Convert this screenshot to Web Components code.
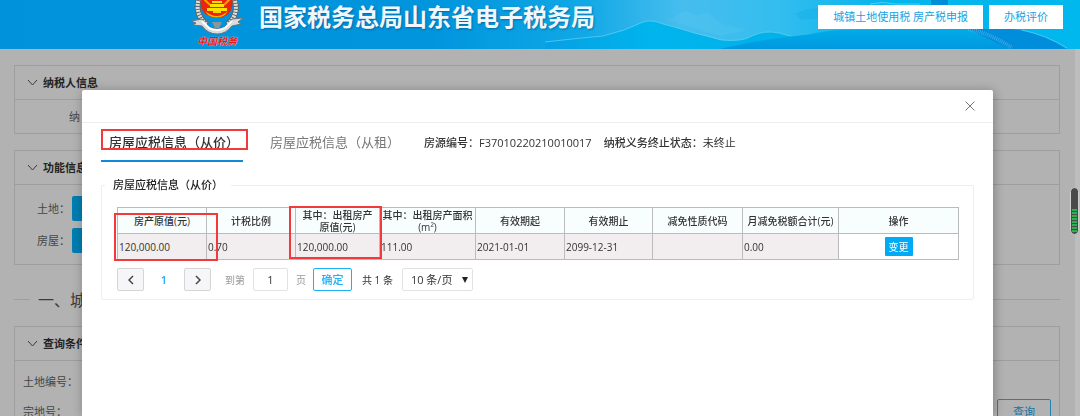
<!DOCTYPE html>
<html lang="zh-CN">
<head>
<meta charset="utf-8">
<title>电子税务局</title>
<style>
    html, body {
        height: 100%;
    }

    body {
        margin: 0;
        overflow: hidden;
        background: #fff;
        color: #444;
        font: 11px/16px 'Open Sans', 'Noto Sans CJK SC', sans-serif;
    }
</style>
</head>
<body>
<tax-page>
    <tax-header slot="header"></tax-header>
    <fold-panel name="纳税人信息">
        <form-line class="indent">纳</form-line>
    </fold-panel>
    <fold-panel name="功能信息">
        <action-line name="土地："></action-line>
        <action-line name="房屋："></action-line>
    </fold-panel>
    <section-title>一、城</section-title>
    <fold-panel name="查询条件">
        <query-form></query-form>
    </fold-panel>
    <tax-dialog slot="dialog">
        <house-tabs></house-tabs>
        <house-group name="房屋应税信息（从价）">
            <house-table></house-table>
            <page-bar></page-bar>
        </house-group>
    </tax-dialog>
    <battery-badge slot="dialog"></battery-badge>
</tax-page>

<script>
function define(name, html, setup) {
    const template = document.createElement('template');
    template.innerHTML = html;

    window.customElements.define(name, class extends HTMLElement {
        constructor() {
            super();
            this.attachShadow({ mode: 'open' });
            this.shadowRoot.appendChild(template.content.cloneNode(true));
            if (setup) setup(this, this.shadowRoot);
        }
    });
}

// copies the name attribute into the .name node
function setName(el, root) {
    root.querySelector('.name').textContent = el.getAttribute('name');
}

define('tax-page', `
<style>
    :host {
        display: block;
        min-height: 100%;
    }

    main {
        display: flex;
        flex-direction: column;
        gap: 16px;
        padding: 16px 20px 0 14px;
    }

    .mask {
        position: fixed;
        inset: 0;
        background: rgba(0, 0, 0, .3);
    }

    .track {
        position: fixed;
        top: 49px;
        right: 0;
        bottom: 0;
        width: 5px;
        background: #bdbdbd;
    }
</style>
<slot name="header"></slot>
<main><slot></slot></main>
<div class="mask"></div>
<div class="track"></div>
<slot name="dialog"></slot>
`);

define('tax-logo', `
<style>
    :host {
        display: flex;
        flex-direction: column;
        align-items: center;
        width: 54px;
    }

    svg {
        display: block;
    }

    span {
        color: #e8141c;
        font: italic bold 10px/14px 'Liberation Serif', 'Noto Sans CJK SC', serif;
        text-shadow: 0 0 1px #fff;
    }
</style>
<svg width="54" height="35" viewBox="0 0 54 35" aria-hidden="true">
    <g fill="none" stroke="#5d6669" stroke-width="6">
        <path d="M9 -2Q4 14 17 25"/>
        <path d="M44 -2Q50 14 37 25"/>
    </g>
    <g fill="none" stroke="#dcdedb" stroke-width="4" stroke-dasharray="2 1">
        <path d="M9 -2Q4 14 17 25"/>
        <path d="M44 -2Q50 14 37 25"/>
    </g>
    <path d="M11 -2H42Q44 10 37 15Q27 21 17 15Q9 10 11 -2Z" fill="#e9260d"/>
    <path d="M15 11Q27 21 38 11L35 15Q27 20 18 15Z" fill="#ffb000"/>
    <path d="M14 -1L20 5M40 -1L34 5" stroke="#ff9c00" stroke-width="2"/>
    <path d="M20 4H34V7H20ZM22 1H32V3H22ZM17 8H37V11H17Z" fill="#ffe000"/>
    <path d="M23 11H31V13H23Z" fill="#ffd000"/>
    <path d="M1 21L12 19L17 26Q27 32 37 26L42 19L53 18L48 22L51 24L42 26Q36 34 27 34Q18 34 12 26L3 25L6 23Z" fill="#d9dcda" stroke="#68757b" stroke-width="1"/>
    <path d="M12 21L19 28Q27 32 35 28L42 21" fill="none" stroke="#fff" stroke-width="2"/>
    <path d="M22 22H32L29 28H25Z" fill="#8c969a"/>
</svg>
<span>中国税务</span>
`);

define('tax-header', `
<style>
    :host {
        position: relative;
        z-index: 2;
        display: flex;
        align-items: flex-start;
        height: 49px;
        padding: 0 17px 0 190px;
        box-sizing: border-box;
        overflow: hidden;
        background: #0093dc;
    }

    .scene {
        position: absolute;
        top: 0;
        left: 0;
        width: 100%;
        height: 100%;
    }

    tax-logo, h1, nav {
        position: relative;
    }

    h1 {
        margin: 0 auto 0 15px;
        color: #f1f8fd;
        font-size: 24px;
        line-height: 34px;
        text-shadow: 1px 1px 2px rgba(0, 60, 110, .5);
        white-space: nowrap;
    }

    nav {
        display: flex;
        gap: 6px;
        padding-top: 5px;
    }

    button {
        height: 24px;
        padding: 0 15px;
        border: 0;
        background: #fff;
        color: #1b9fe3;
        font: inherit;
        white-space: nowrap;
    }
</style>
<svg class="scene" viewBox="0 0 1080 49" preserveAspectRatio="none" aria-hidden="true">
    <defs>
        <linearGradient id="sky">
            <stop offset="0" stop-color="#0093dc"/>
            <stop offset=".4" stop-color="#0095dd"/>
            <stop offset=".54" stop-color="#10a8e6"/>
            <stop offset=".63" stop-color="#46bdee"/>
            <stop offset=".72" stop-color="#34bdef"/>
            <stop offset=".82" stop-color="#05b5ec"/>
            <stop offset="1" stop-color="#00b8ee"/>
        </linearGradient>
        <linearGradient id="hill">
            <stop offset="0" stop-color="#06a0e4"/>
            <stop offset=".2" stop-color="#00b4ec"/>
            <stop offset=".5" stop-color="#00b1ea"/>
            <stop offset="1" stop-color="#02a4e4"/>
        </linearGradient>
        <linearGradient id="base" x2="0" y2="1">
            <stop offset="0" stop-color="#00adea"/>
            <stop offset="1" stop-color="#0098df"/>
        </linearGradient>
    </defs>
    <path d="M0 0H1080V49H0Z" fill="url(#sky)"/>
    <path d="M668 20L685 11L697 15L707 12L722 24L748 30L720 36Z" fill="#6accf2" opacity=".2"/>
    <path d="M545 42Q580 38 603 36Q625 31 643 22Q652 19 663 24Q682 29 694 33L720 40Q742 42 752 36Q764 30 779 33L798 38Q815 31 840 30L970 28L1012 30Q1045 36 1068 49H545Z" fill="url(#hill)"/>
    <path d="M545 42Q580 38 603 36Q625 31 643 22Q652 19 663 24Q682 29 694 33Q708 36 722 40Q742 42 752 36Q764 30 779 33L794 37" fill="none" stroke="#67d0f2" stroke-width="1" opacity=".7"/>
    <path d="M720 49Q760 39 815 34Q840 28 870 31L970 28Q988 33 1012 49Z" fill="url(#base)"/>
    <path d="M968 29Q985 37 1009 49H1066Q1045 33 1012 29Z" fill="#008ddb"/>
    <path d="M968 29Q990 33 1012 48" fill="none" stroke="#6fc6ef" stroke-width="4" stroke-dasharray="1 1" opacity=".5"/>
    <path d="M1022 30Q1046 35 1067 48" fill="none" stroke="#4dc4f1"/>
    <path d="M795 14Q808 7 822 8V18L801 20Z" fill="#009fe2" opacity=".2"/>
    <path d="M931 0H948V5H931Z" fill="#008dd7"/>
    <path d="M870 4Q882 1 895 4H920" fill="none" stroke="#78d4f5" opacity=".7"/>
</svg>
<tax-logo></tax-logo>
<h1>国家税务总局山东省电子税务局</h1>
<nav>
    <button type="button">城镇土地使用税 房产税申报</button>
    <button type="button">办税评价</button>
</nav>
`);

define('fold-panel', `
<style>
    :host {
        display: block;
        border: 1px solid #e2e2e2;
    }

    h2 {
        display: flex;
        align-items: center;
        gap: 5px;
        height: 33px;
        margin: 0;
        padding-left: 12px;
        border-bottom: 1px solid #e2e2e2;
        color: #333;
        font-size: 11px;
    }
</style>
<h2>
    <svg width="11" height="8" viewBox="0 0 11 8" aria-hidden="true"><path d="M1 1L5.500 6L10 1" fill="none" stroke="#555"/></svg>
    <span class="name"></span>
</h2>
<slot></slot>
`, setName);

define('form-line', `
<style>
    :host {
        display: flex;
        align-items: center;
        height: 33px;
        padding-left: 54px;
        color: #666;
    }
</style>
<slot></slot>
`);

define('action-line', `
<style>
    :host {
        display: flex;
        align-items: center;
        height: 25px;
        padding: 11px 0 0 22px;
        color: #666;
    }

    :host(:last-child) {
        padding: 7px 0 11px 22px;
    }

    label {
        width: 35px;
    }

    button {
        width: 64px;
        height: 25px;
        border: 0;
        border-radius: 2px;
        background: #00b4ff;
    }
</style>
<label class="name" for="go"></label>
<button type="button" id="go"></button>
`, setName);

define('section-title', `
<style>
    :host {
        display: flex;
        align-items: center;
        gap: 8px;
        height: 29px;
        margin: 4px 0 -4px;
        color: #555;
        font-size: 16px;
    }

    :host::before, :host::after {
        content: '';
        width: 16px;
        border-top: 1px solid #e2e2e2;
    }

    :host::after {
        flex: 1;
    }
</style>
<slot></slot>
`);

define('query-form', `
<style>
    :host {
        display: flex;
        justify-content: space-between;
        align-items: flex-end;
        padding: 6px 8px 0;
        color: #666;
    }

    .line {
        display: flex;
        align-items: center;
        height: 30px;
    }

    label {
        width: 70px;
    }

    input {
        width: 120px;
        height: 24px;
        box-sizing: border-box;
        border: 1px solid #ddd;
    }

    button {
        width: 54px;
        height: 26px;
        margin-bottom: 2px;
        border: 1px solid #2dbdff;
        border-radius: 2px;
        background: none;
        color: #1fa8ee;
        font: inherit;
    }
</style>
<div>
    <div class="line"><label for="land">土地编号：</label><input id="land"></div>
    <div class="line"><label for="parcel">宗地号：</label><input id="parcel"></div>
</div>
<button type="button">查询</button>
`);

define('tax-dialog', `
<style>
    :host {
        position: fixed;
        top: 90px;
        right: 87px;
        bottom: 0;
        left: 82px;
        background: #fff;
        border-radius: 2px 2px 0 0;
        box-shadow: 1px 1px 12px rgba(0, 0, 0, .3);
    }

    header {
        display: flex;
        justify-content: flex-end;
        align-items: center;
        height: 32px;
        padding-right: 15px;
        border-bottom: 1px solid #eee;
    }

    button {
        display: flex;
        padding: 3px;
        border: 0;
        background: none;
    }

    section {
        padding: 0 19px;
    }
</style>
<header>
    <button type="button" aria-label="关闭">
        <svg width="10" height="10" viewBox="0 0 10 10"><path d="M.5 .5L9.500 9.500M9.500 .5L.5 9.500" stroke="#777"/></svg>
    </button>
</header>
<section><slot></slot></section>
`);

// red frame drawn over whatever holds it
define('red-mark', `
<style>
    :host {
        position: absolute;
        z-index: 1;
        box-sizing: border-box;
        border: 2px solid #f23a3a;
        pointer-events: none;
    }
</style>
`);

define('house-tabs', `
<style>
    :host {
        display: flex;
        align-items: center;
        color: #333;
    }

    button {
        position: relative;
        height: 39px;
        padding: 0 4px 0 8px;
        border: 0;
        border-bottom: 2px solid transparent;
        background: none;
        color: #777;
        font: inherit;
        font-size: 13px;
        white-space: nowrap;
    }

    .on {
        border-color: #1089d8;
        color: #333;
        font-weight: 500;
    }

    red-mark {
        top: 6px;
        left: 0;
        width: 147px;
        height: 21px;
    }

    button + button {
        margin-left: 19px;
    }

    p {
        display: flex;
        gap: 12px;
        margin: 0 0 0 20px;
        white-space: nowrap;
    }

    b {
        font-weight: 500;
    }
</style>
<button type="button" class="on">房屋应税信息（从价）<red-mark></red-mark></button>
<button type="button">房屋应税信息（从租）</button>
<p>
    <span><b>房源编号：</b>F37010220210010017</span>
    <span><b>纳税义务终止状态：</b>未终止</span>
</p>
`);

define('house-group', `
<style>
    :host {
        display: block;
        padding-top: 15px;
    }

    fieldset {
        min-width: 0;
        margin: 0;
        padding: 14px 16px 8px 15px;
        border: 1px solid #eee;
        border-radius: 2px;
    }

    legend {
        margin-left: -12px;
        padding: 0 8px;
        color: #222;
        font-weight: 500;
    }
</style>
<fieldset>
    <legend class="name"></legend>
    <slot></slot>
</fieldset>
`, setName);

define('house-table', `
<style>
    :host {
        display: block;
    }

    table {
        width: 100%;
        table-layout: fixed;
        border-collapse: collapse;
        color: #333;
        font-size: 10px;
        line-height: 12px;
    }

    th, td {
        position: relative;
        height: 25px;
        padding: 0 1px;
        border: 1px solid #bbb;
        white-space: nowrap;
    }

    th {
        background: #f8fefe;
        font-weight: 500;
    }

    td {
        background: #f2eeef;
    }

    td:last-child {
        background: #fff;
        text-align: center;
    }

    td button {
        height: 19px;
        padding: 0 4px;
        border: 0;
        border-radius: 1px;
        background: #00aaf5;
        color: #fff;
        font: inherit;
    }

    .worth {
        top: 5px;
        left: -4px;
        width: 104px;
        height: 48px;
    }

    .rented {
        top: -2px;
        left: -7px;
        width: 93px;
        height: 53px;
    }
</style>
<table>
    <colgroup>
        <col style="width: 89px"><col style="width: 89px"><col style="width: 84px">
        <col style="width: 96px"><col style="width: 89px"><col style="width: 88px">
        <col style="width: 90px"><col style="width: 96px"><col style="width: 120px">
    </colgroup>
    <thead>
        <tr>
            <th>房产原值(元)<red-mark class="worth"></red-mark></th>
            <th>计税比例</th>
            <th>其中：出租房产<br>原值(元)<red-mark class="rented"></red-mark></th>
            <th>其中：出租房产面积<br>(m²)</th>
            <th>有效期起</th>
            <th>有效期止</th>
            <th>减免性质代码</th>
            <th>月减免税额合计(元)</th>
            <th>操作</th>
        </tr>
    </thead>
    <tbody>
        <tr>
            <td>120,000.00</td>
            <td>0.70</td>
            <td>120,000.00</td>
            <td>111.00</td>
            <td>2021-01-01</td>
            <td>2099-12-31</td>
            <td></td>
            <td>0.00</td>
            <td><button type="button">变更</button></td>
        </tr>
    </tbody>
</table>
`);

define('page-bar', `
<style>
    :host {
        display: flex;
        align-items: center;
        gap: 8px;
        padding-top: 8px;
        color: #333;
        font-size: 10px;
    }

    button, input, select {
        height: 23px;
        box-sizing: border-box;
        border: 1px solid #e2e2e2;
        border-radius: 2px;
        background: #fff;
        color: #333;
        font: inherit;
        font-size: 11px;
    }

    .step {
        display: flex;
        align-items: center;
        justify-content: center;
        width: 27px;
        padding: 0;
        border-color: #d5d5d8;
        background: #f6f6f8;
    }

    .now {
        width: 24px;
        color: #1eb0f5;
        font-size: 11px;
        font-weight: 600;
        text-align: center;
    }

    label {
        display: flex;
        align-items: center;
        gap: 8px;
        margin-left: 6px;
        color: #999;
    }

    input {
        width: 35px;
        text-align: center;
    }

    .ok {
        width: 39px;
        padding: 0;
        border-color: #1eb0f5;
        color: #1eb0f5;
        font-weight: 500;
    }

    label + .ok {
        margin-left: -1px;
    }

    .total {
        margin: 0 1px 0 2px;
    }

    .size {
        display: grid;
        align-items: center;
    }

    .size > * {
        grid-area: 1 / 1;
    }

    select {
        width: 71px;
        padding: 0 8px;
        appearance: none;
    }

    .size svg {
        justify-self: end;
        margin-right: 5px;
        pointer-events: none;
    }
</style>
<button type="button" class="step" aria-label="上一页">
    <svg width="6" height="10" viewBox="0 0 6 10"><path d="M5 1L1 5L5 9" fill="none" stroke="#444" stroke-width="1.500"/></svg>
</button>
<span class="now">1</span>
<button type="button" class="step" aria-label="下一页">
    <svg width="6" height="10" viewBox="0 0 6 10"><path d="M1 1L5 5L1 9" fill="none" stroke="#444" stroke-width="1.500"/></svg>
</button>
<label>到第<input value="1">页</label>
<button type="button" class="ok">确定</button>
<span class="total">共 1 条</span>
<div class="size">
    <select aria-label="每页条数"><option>10 条/页</option></select>
    <svg width="6" height="6" viewBox="0 0 6 6" aria-hidden="true"><path d="M0 0H6L3 6Z" fill="#222"/></svg>
</div>
`);

define('battery-badge', `
<style>
    :host {
        position: fixed;
        top: 187px;
        right: 1px;
    }

    svg {
        display: block;
    }
</style>
<svg width="9" height="48" viewBox="0 0 9 48" aria-hidden="true">
    <rect x=".5" y=".5" width="8" height="47" rx="4" fill="#4a4a4a" stroke="#d0d0d0"/>
    <path d="M4.500 22V45" stroke="#2fae52" stroke-width="5" stroke-dasharray="2 1"/>
</svg>
`);
</script>
</body>
</html>
